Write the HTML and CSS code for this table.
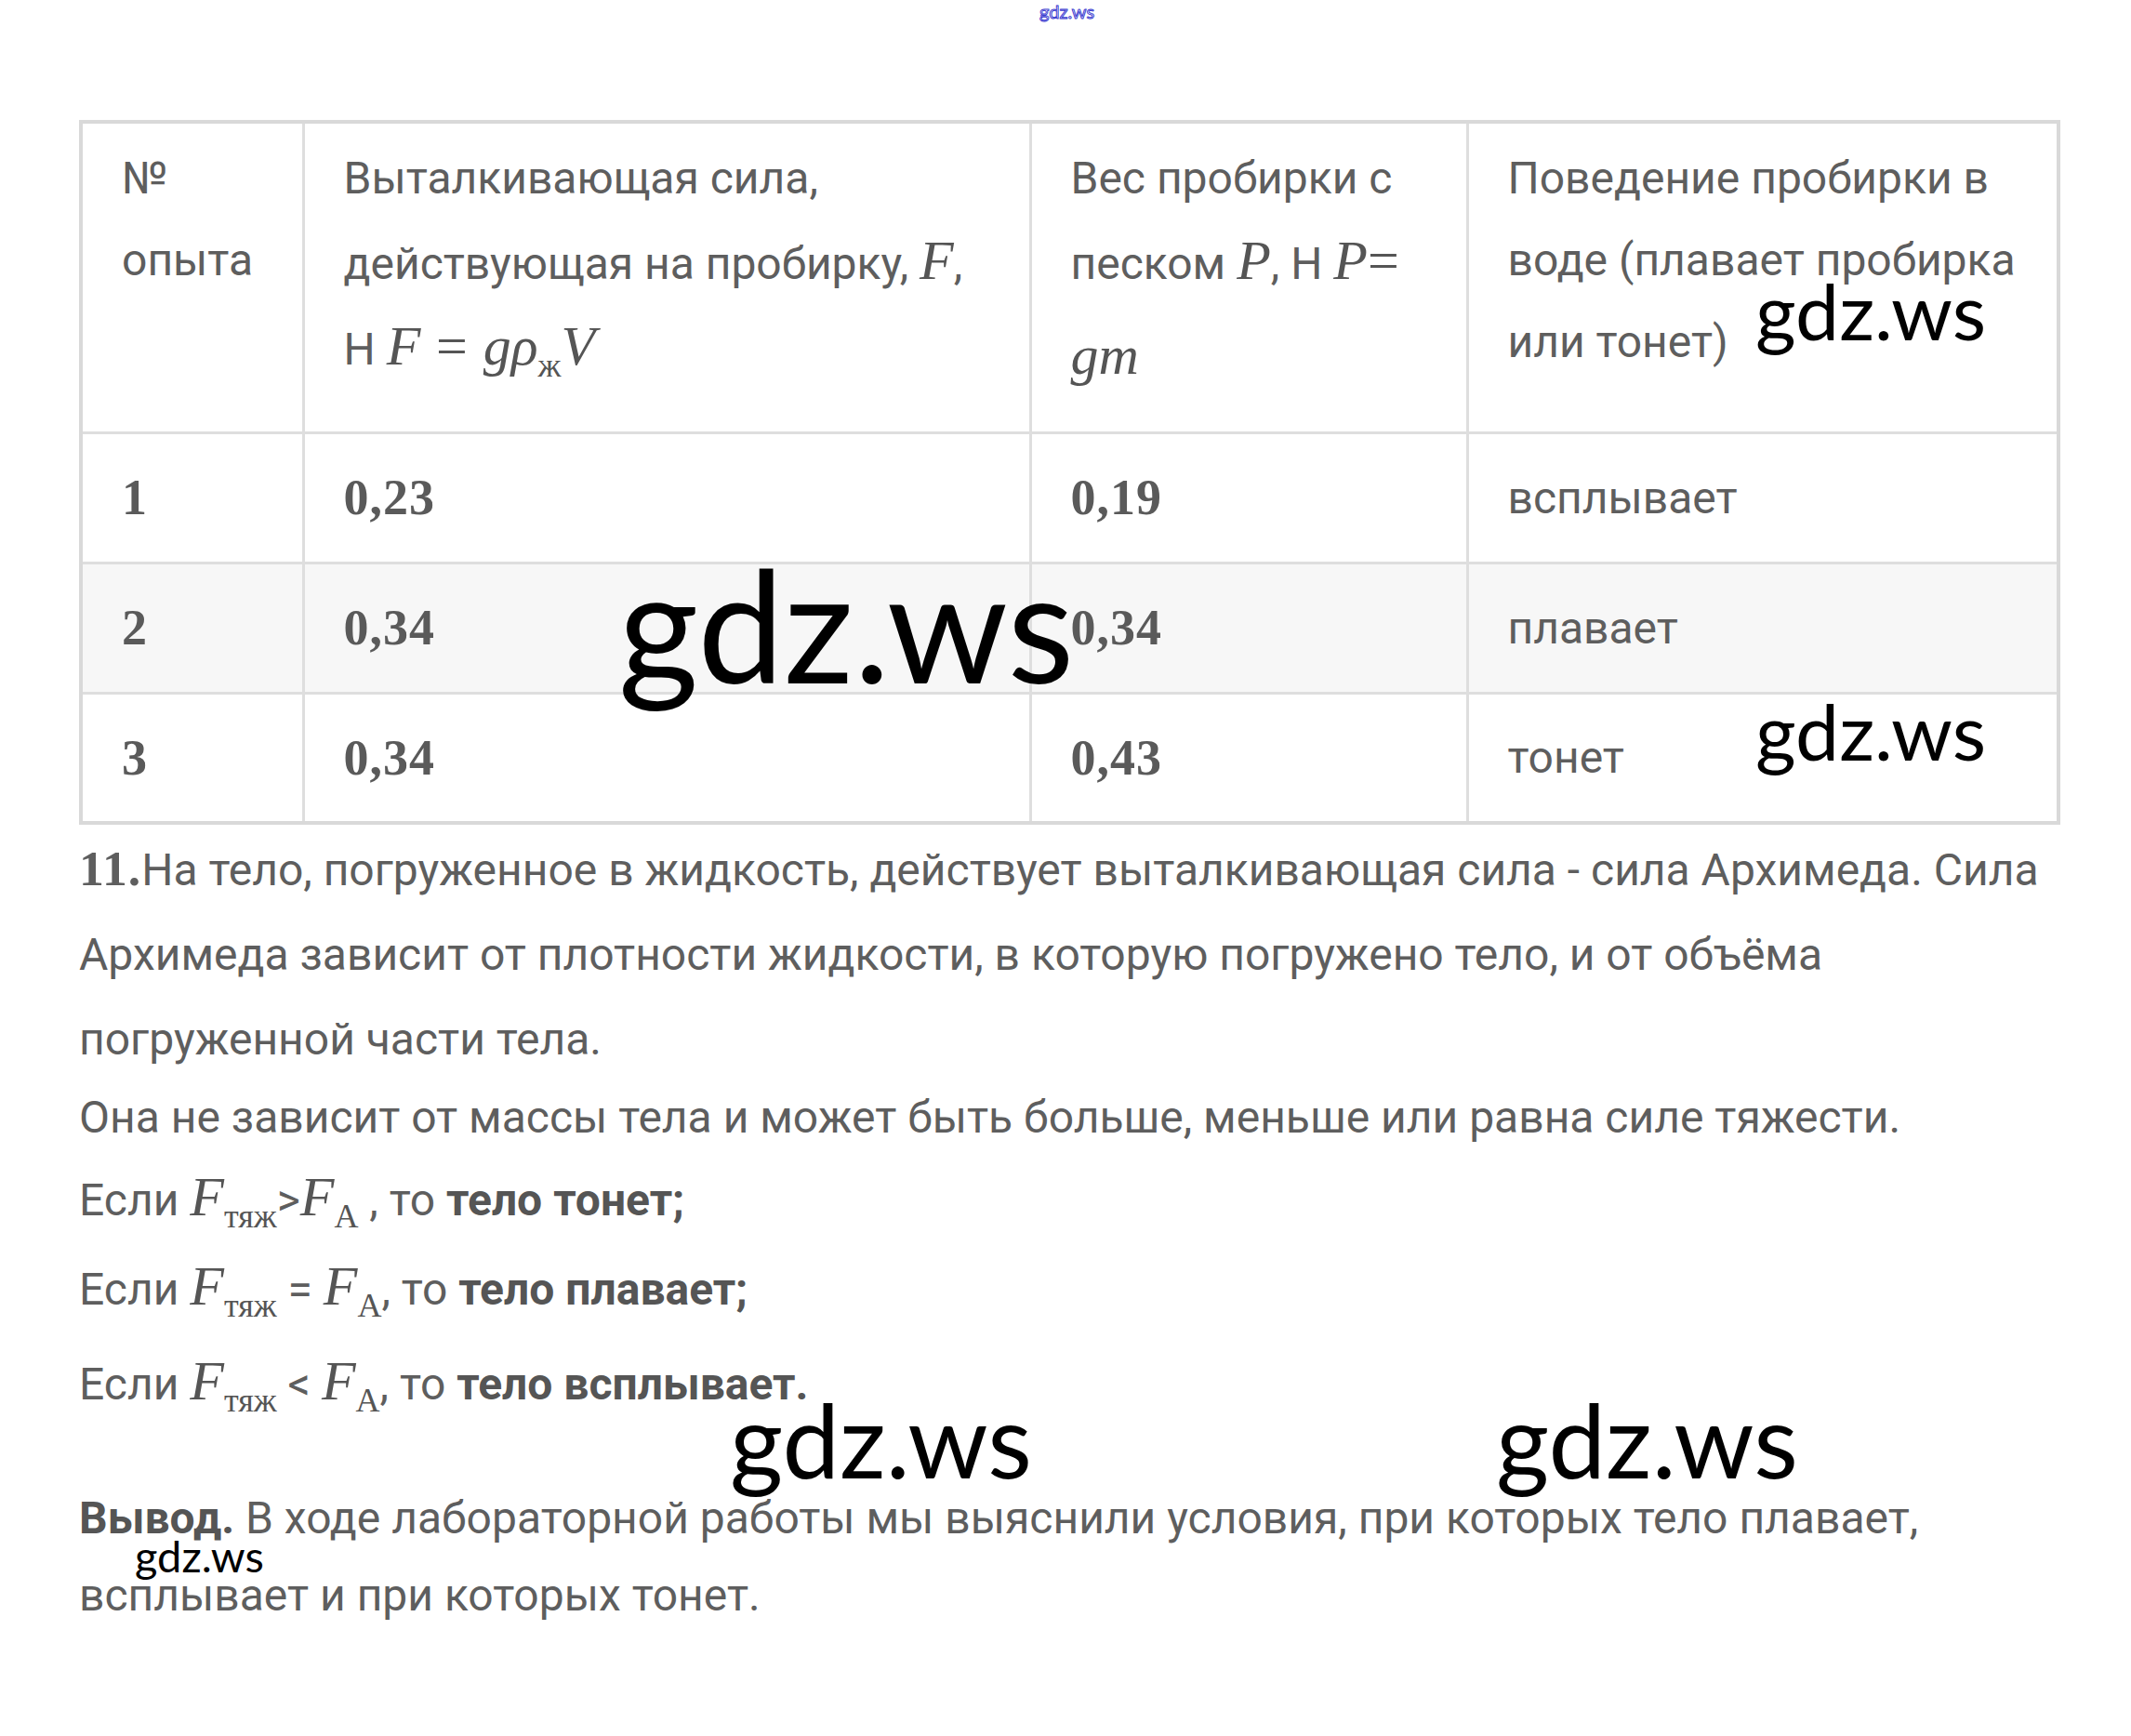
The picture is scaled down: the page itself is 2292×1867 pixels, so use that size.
FILE: index.html
```html
<!DOCTYPE html>
<html lang="ru">
<head>
<meta charset="utf-8">
<title>gdz.ws</title>
<link rel="stylesheet" href="styles.css">
</head>
<body>
<div class="page">
  <div class="wm wm-top">gdz.ws</div>

  <table class="tbl">
    <colgroup>
      <col class="c1"><col class="c2"><col class="c3"><col class="c4">
    </colgroup>
    <tr class="head">
      <td>№<br>опыта</td>
      <td>Выталкивающая сила,<br>действующая на пробирку, <span class="m">F</span>,<br>Н <span class="m">F</span><span class="op eq">=</span><span class="m">gρ<sub>ж</sub>V</span></td>
      <td>Вес пробирки с<br>песком <span class="m">P</span>, Н <span class="m">P</span><span class="op">=</span><br><span class="m gm">gm</span></td>
      <td>Поведение пробирки в<br>воде (плавает пробирка<br>или тонет)</td>
    </tr>
    <tr class="row">
      <td class="num">1</td><td class="num">0,23</td><td class="num">0,19</td><td>всплывает</td>
    </tr>
    <tr class="row alt">
      <td class="num">2</td><td class="num">0,34</td><td class="num">0,34</td><td>плавает</td>
    </tr>
    <tr class="row">
      <td class="num">3</td><td class="num">0,34</td><td class="num">0,43</td><td>тонет</td>
    </tr>
  </table>

  <div class="text">
    <p class="p1"><span class="num-s">11.</span>На тело, погруженное в жидкость, действует выталкивающая сила - сила Архимеда. Сила<br>Архимеда зависит от плотности жидкости, в которую погружено тело, и от объёма<br>погруженной части тела.</p>
    <p class="p2">Она не зависит от массы тела и может быть больше, меньше или равна силе тяжести.</p>
    <p class="p3">Если <span class="m">F<sub>тяж</sub></span>&gt;<span class="m">F<sub>А</sub></span> , то <b>тело тонет;</b></p>
    <p class="p4">Если <span class="m">F<sub>тяж</sub></span> = <span class="m">F<sub>А</sub></span>, то <b>тело плавает;</b></p>
    <p class="p5">Если <span class="m">F<sub>тяж</sub></span> &lt; <span class="m">F<sub>А</sub></span>, то <b>тело всплывает.</b></p>
    <p class="p6"><b>Вывод.</b> В ходе лабораторной работы мы выяснили условия, при которых тело плавает,</p>
    <p class="p7">всплывает и при которых тонет.</p>
  </div>

  <div class="wm wm-head">gdz.ws</div>
  <div class="wm wm-big">gdz.ws</div>
  <div class="wm wm-row3">gdz.ws</div>
  <div class="wm wm-mid1">gdz.ws</div>
  <div class="wm wm-mid2">gdz.ws</div>
  <div class="wm wm-small">gdz.ws</div>
</div>
</body>
</html>
```

FILE: styles.css
```css
html, body {
  margin: 0;
  padding: 0;
  background: #ffffff;
}

.page {
  position: relative;
  width: 2292px;
  min-height: 1867px;
  padding: 129px 0 0 85px;
  box-sizing: border-box;
  font-family: Roboto, "Noto Sans", sans-serif;
  color: #5e5e5e;
}

.tbl {
  width: 2127px;
  table-layout: fixed;
  border-collapse: collapse;
  border: 4px solid #d9d9d9;
  font-size: 48px;
}

.c1 { width: 239px; }
.c2 { width: 782px; }
.c3 { width: 470px; }
.c4 { width: 636px; }

.tbl td {
  border: 3px solid #dedede;
  padding: 0 10px 0 42px;
  box-sizing: border-box;
  white-space: nowrap;
}

.head td {
  height: 334px;
  vertical-align: top;
  padding-top: 15px;
  line-height: 88px;
}

.row td {
  height: 140px;
  vertical-align: middle;
}

.alt td { background: #f7f7f7; }

.num {
  font-family: "Liberation Serif", "DejaVu Serif", serif;
  font-weight: bold;
  font-size: 54px;
  letter-spacing: 1px;
  color: #5a5a5a;
}

.m {
  font-family: "Liberation Serif", "DejaVu Serif", serif;
  font-style: italic;
  font-size: 1.25em;
  color: #555;
}

.m sub {
  font-style: normal;
  font-family: "Liberation Serif", serif;
  font-size: 0.6em;
  vertical-align: -0.35em;
  line-height: 0;
}

.op {
  font-family: "Liberation Serif", serif;
  font-size: 1.25em;
  color: #555;
}

.eq { margin: 0 0.28em; }

.gm { position: relative; top: 10px; }

.text {
  width: 2127px;
  font-size: 48px;
}

.text p { margin: 0; white-space: nowrap; }

.num-s {
  font-family: "Liberation Serif", serif;
  font-weight: bold;
  font-size: 1.12em;
  letter-spacing: 1px;
}

.text b { font-weight: bold; color: #555; }

.p1 { line-height: 91px; margin-top: 2px !important; }
.p2 { line-height: 78px; }
.p3 { line-height: 92px; }
.p4 { line-height: 92px; }
.p5 { line-height: 105px; }
.p6 { line-height: 80px; margin-top: 52px !important; }
.p7 { line-height: 86px; }

.wm {
  position: absolute;
  font-family: Lato, "Open Sans", sans-serif;
  color: #000;
  line-height: 1;
  white-space: nowrap;
}

.wm-top {
  left: 1118px;
  top: 2px;
  font-size: 20px;
  color: #fff;
  -webkit-text-stroke: 1px #3b3bd0;
}

.wm-head { left: 1888px; top: 292px; font-size: 84px; }
.wm-row3 { left: 1888px; top: 744px; font-size: 84px; }
.wm-big { left: 665px; top: 588px; font-size: 166px; }
.wm-mid1 { left: 785px; top: 1492px; font-size: 110px; }
.wm-mid2 { left: 1609px; top: 1492px; font-size: 110px; }
.wm-small { left: 145px; top: 1650px; font-size: 47px; }
```
